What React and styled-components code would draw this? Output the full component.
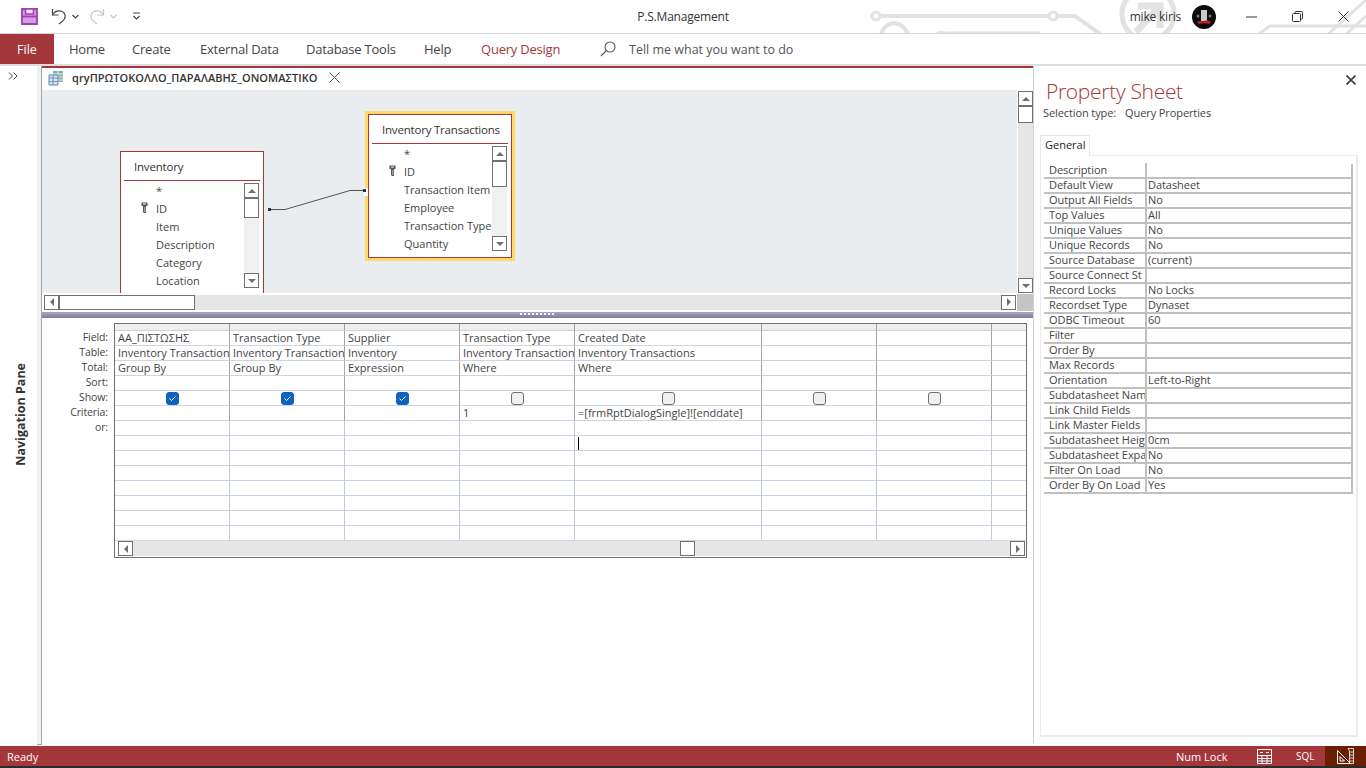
import React from "react";
import styled, { createGlobalStyle, css } from "styled-components";

const Global = createGlobalStyle`
    html, body {
        margin: 0;
        padding: 0;
        background: #fff;
    }
    * {
        box-sizing: border-box;
    }
    body {
        font-family: "Open Sans", "Noto Sans", "Liberation Sans", sans-serif;
        color: #444;
    }
`;

const RED = "#a4373a";

const Window = styled.div`
    width: 1366px;
    height: 768px;
    display: flex;
    flex-direction: column;
    overflow: hidden;
    background: #fff;
`;

/* title bar */
const TitleBar = styled.div`
    position: relative;
    height: 34px;
    flex: none;
    display: grid;
    grid-template-columns: 1fr auto 1fr;
    align-items: center;
    border-bottom: 1px solid #d6d6d6;
`;
const Circuit = styled.svg`
    position: absolute;
    left: 0;
    top: 0;
    width: 1366px;
    height: 33px;
`;
const Quick = styled.div`
    position: relative;
    display: flex;
    align-items: center;
    padding-left: 21px;
    height: 33px;
`;
const QuickBtn = styled.div`
    display: flex;
    align-items: center;
    margin-left: ${(p) => p.$gap || 0}px;
`;
const AppName = styled.div`
    position: relative;
    font-size: 12px;
    color: #333;
    letter-spacing: -0.2px;
`;
const Account = styled.div`
    position: relative;
    display: flex;
    align-items: center;
    justify-content: flex-end;
    height: 33px;
`;
const UserName = styled.div`
    font-size: 12px;
    letter-spacing: -0.2px;
    color: #333;
    margin-right: 11px;
`;
const WinBtn = styled.div`
    width: 46px;
    height: 33px;
    display: flex;
    align-items: center;
    justify-content: center;
    margin-left: ${(p) => p.$gap || 0}px;
`;

/* ribbon */
const Ribbon = styled.div`
    height: 32px;
    flex: none;
    display: flex;
    align-items: flex-start;
    border-bottom: 2px solid #dedede;
`;
const FileTab = styled.div`
    width: 54px;
    margin-right: 15px;
    height: 30px;
    background: ${RED};
    color: #fff;
    font-size: 12.5px;
    display: flex;
    align-items: center;
    justify-content: center;
`;
const RibbonTab = styled.div`
    width: ${(p) => p.$w}px;
    height: 30px;
    line-height: 31px;
    font-size: 13px;
    white-space: nowrap;
    letter-spacing: -0.22px;
    color: ${(p) => (p.$accent ? RED : "#444")};
`;
const TellMe = styled.div`
    display: flex;
    align-items: center;
    height: 30px;
    gap: 13px;
    font-size: 12.5px;
    color: #555;
`;

/* main */
const Main = styled.div`
    flex: 1;
    min-height: 0;
    display: flex;
`;
const NavPane = styled.div`
    width: 37px;
    flex: none;
    display: flex;
    flex-direction: column;
`;
const NavToggle = styled.div`
    height: 20px;
    padding-left: 8px;
    flex: none;
    display: flex;
    align-items: center;
`;
const NavLabelBox = styled.div`
    flex: 1;
    display: flex;
    align-items: center;
    justify-content: center;
    padding-left: 3px;
`;
const NavLabel = styled.div`
    writing-mode: vertical-rl;
    transform: rotate(180deg);
    font-size: 12.5px;
    font-weight: 700;
    color: #333;
`;
const NavEdge = styled.div`
    width: 5px;
    flex: none;
    height: 679px;
    background: #f0f0f0;
    border-right: 1px solid #a3a6ac;
    border-bottom: 1px solid #a3a6ac;
`;

const Doc = styled.div`
    width: 991px;
    flex: none;
    display: flex;
    flex-direction: column;
`;
const TabStrip = styled.div`
    height: 24px;
    flex: none;
    display: flex;
    align-items: center;
    border-top: 2px solid ${RED};
    padding: 0 0 3px 6px;
`;
const TabIconBox = styled.div`
    display: flex;
    margin-right: 8px;
`;
const TabTitle = styled.div`
    width: 257px;
    font-size: 11px;
    font-weight: 600;
    letter-spacing: 0.05px;
    color: #333;
    white-space: nowrap;
`;

const UpperPane = styled.div`
    height: 203px;
    flex: none;
    display: flex;
    gap: 1px;
`;
const Canvas = styled.div`
    position: relative;
    flex: 1;
    overflow: hidden;
    background: #e9edf0;
`;
const Relation = styled.svg`
    position: absolute;
    left: 0;
    top: 0;
    width: 100%;
    height: 100%;
    z-index: 2;
`;
const TableBox = styled.div`
    position: absolute;
    left: ${(p) => p.$x}px;
    top: ${(p) => p.$y}px;
    width: 144px;
    height: 144px;
    background: #fff;
    border: 1.5px solid ${RED};
    ${(p) =>
        p.$active &&
        css`
            box-shadow: 0 0 0 3px #ffd966;
        `}
`;
const TableHead = styled.div`
    height: 29px;
    margin: 0 3px;
    padding-left: 10px;
    line-height: 30px;
    font-size: 11.5px;
    color: #333;
    letter-spacing: -0.2px;
    white-space: nowrap;
    border-bottom: 1px solid ${RED};
`;
const TableBody = styled.div`
    display: flex;
`;
const FieldList = styled.div`
    flex: 1;
    min-width: 0;
    overflow: hidden;
`;
const FieldRow = styled.div`
    height: 18px;
    display: flex;
    align-items: center;
    font-size: 11px;
    color: #444;
    white-space: nowrap;
`;
const KeySlot = styled.div`
    width: 35px;
    flex: none;
    display: flex;
    padding-left: 20px;
`;
const VBar = styled.div`
    width: 15px;
    flex: none;
    height: ${(p) => p.$h || "auto"};
    margin: ${(p) => (p.$inTable ? "2px 4px 0 0" : "1px 0 0 0")};
    display: flex;
    flex-direction: column;
    background: ${(p) => (p.$inTable ? "#f0f0f0" : "#e6e6e6")};
`;
const HBar = styled.div`
    flex: 1;
    height: 15px;
    display: flex;
    justify-content: space-between;
    background: #e6e6e6;
`;
const Thumb = styled.div`
    flex: none;
    background: #fff;
    border: 1px solid #707070;
    width: ${(p) => p.$w || 15}px;
    height: ${(p) => p.$h || 15}px;
`;
const Spacer = styled.div`
    flex: 1;
`;
const BarStart = styled.div`
    display: flex;
`;
const BarBtn = styled.div`
    width: 15px;
    height: 15px;
    flex: none;
    background: #fff;
    border: 1px solid #707070;
    display: flex;
    align-items: center;
    justify-content: center;
    &::after {
        content: "";
        width: 0;
        height: 0;
        ${(p) =>
            p.$dir === "up" &&
            css`
                border-left: 4px solid transparent;
                border-right: 4px solid transparent;
                border-bottom: 4px solid #707070;
            `}
        ${(p) =>
            p.$dir === "down" &&
            css`
                border-left: 4px solid transparent;
                border-right: 4px solid transparent;
                border-top: 4px solid #707070;
            `}
        ${(p) =>
            p.$dir === "left" &&
            css`
                border-top: 4px solid transparent;
                border-bottom: 4px solid transparent;
                border-right: 4px solid #707070;
            `}
        ${(p) =>
            p.$dir === "right" &&
            css`
                border-top: 4px solid transparent;
                border-bottom: 4px solid transparent;
                border-left: 4px solid #707070;
            `}
    }
`;
const HScrollRow = styled.div`
    height: 18px;
    flex: none;
    display: flex;
    align-items: center;
    padding-left: 2px;
`;
const LongBar = styled(HBar)`
    flex: none;
    width: 972px;
    margin-right: 1px;
`;
const Corner = styled.div`
    width: 16px;
    height: 17px;
    background: #c4c5c7;
`;
const Splitter = styled.div`
    height: 6px;
    flex: none;
    margin-top: 1px;
    background: linear-gradient(#a9a6c0, #7f7c9c);
    display: flex;
    justify-content: flex-start;
    padding-left: 478px;
`;
const Grip = styled.div`
    width: 36px;
    height: 2px;
    margin-top: 1px;
    background: repeating-linear-gradient(90deg, #fff 0 2px, transparent 2px 4px);
`;

/* query grid */
const QueryPane = styled.div`
    flex: 1;
    display: flex;
    padding-top: 5px;
    align-items: flex-start;
`;
const Labels = styled.div`
    width: 72px;
    flex: none;
    padding: 7px 6px 0 0;
`;
const Label = styled.div`
    height: 15px;
    line-height: 14px;
    font-size: 10.5px;
    text-align: right;
    color: #444;
    letter-spacing: -0.1px;
`;
const GridBox = styled.div`
    width: 913px;
    border: 1px solid #707070;
`;
const GridTable = styled.div`
    display: grid;
    grid-template-columns: 115px 115px 115px 115px 187px 115px 115px 34px;
`;
const HeadCell = styled.div`
    height: 7px;
    background: #eeeeee;
    border-right: 1px solid #a0a0a0;
    border-bottom: 1px solid #c9d2e0;
    &:nth-child(8n) {
        border-right: 0;
    }
`;
const Cell = styled.div`
    height: 15px;
    padding-left: ${(p) => (p.$center ? 0 : 3)}px;
    line-height: 14px;
    font-size: 11px;
    white-space: nowrap;
    overflow: hidden;
    color: #444;
    border-bottom: 1px solid #cdd5e2;
    border-right: ${(p) => (p.$last ? "0" : `1px solid ${p.$strong ? "#a6a6a6" : "#c4ccd8"}`)};
    display: flex;
    align-items: center;
    justify-content: ${(p) => (p.$center ? "center" : "flex-start")};
`;
const Box = styled.div`
    width: 13px;
    height: 13px;
    border-radius: 3px;
    display: flex;
    align-items: center;
    justify-content: center;
    background: ${(p) => (p.$on ? "#0f62be" : "#f0f0f0")};
    border: 1px solid ${(p) => (p.$on ? "#0f62be" : "#707070")};
`;
const Caret = styled.div`
    width: 1px;
    height: 13px;
    background: #000;
`;
const GridFoot = styled.div`
    height: 16px;
    padding: 0 2px 0 3px;
    display: flex;
`;
const GridBar = styled(HBar)`
    align-items: center;
    justify-content: flex-start;
`;
const MidThumb = styled(Thumb)`
    margin-left: 547px;
    margin-right: 315px;
`;

/* property sheet */
const Sheet = styled.div`
    flex: 1;
    display: flex;
    flex-direction: column;
    position: relative;
    height: 677px;
    border-left: 1px solid #d2d2d2;
    padding: 0 8px 0 6px;
`;
const CloseBtn = styled.div`
    position: absolute;
    right: 10px;
    top: 9px;
    display: flex;
`;
const SheetTitle = styled.div`
    margin: 10px 0 0 6px;
    height: 29px;
    line-height: 30px;
    font-size: 21px;
    font-weight: 300;
    color: ${RED};
    letter-spacing: -0.3px;
`;
const Selection = styled.div`
    height: 14px;
    margin: 0 0 0 3px;
    display: flex;
    align-items: center;
    gap: 9px;
    font-size: 11px;
    letter-spacing: -0.1px;
    color: #444;
`;
const SheetTab = styled.div`
    width: 50px;
    height: 21px;
    margin-top: 16px;
    padding-left: 4px;
    line-height: 17px;
    font-size: 11px;
    color: #222;
    background: #fff;
    border: 1px solid #e6e6e6;
    border-bottom: 0;
    position: relative;
    z-index: 1;
`;
const SheetPanel = styled.div`
    height: 582px;
    margin-top: -1px;
    padding: 8px 3px 0 3px;
    border: 2px solid #ececec;
    border-top-width: 1px;
    border-left-width: 1px;
`;
const PropRow = styled.div`
    display: grid;
    grid-template-columns: 103px 1fr;
    height: 15px;
    border-bottom: 2px solid #c0c0c0;
    border-right: 2px solid #c0c0c0;
    font-size: 11px;
    line-height: 13px;
    letter-spacing: -0.05px;
    color: #444;
`;
const PropName = styled.div`
    height: 14px;
    margin-top: -1px;
    padding-left: 5px;
    white-space: nowrap;
    overflow: hidden;
    border-right: 2px solid #c0c0c0;
`;
const PropValue = styled.div`
    height: 14px;
    margin-top: -1px;
    padding-left: 1px;
    white-space: nowrap;
`;

/* status bar */
const StatusBar = styled.div`
    height: 22px;
    flex: none;
    margin-top: 3px;
    display: flex;
    align-items: stretch;
    background: ${RED};
    border-bottom: 2px solid #2b2b2b;
    color: #fff;
`;
const StatusText = styled.div`
    display: flex;
    align-items: center;
    padding-left: ${(p) => p.$left || 0}px;
    width: ${(p) => (p.$w ? `${p.$w}px` : "auto")};
    font-size: ${(p) => p.$size || 11}px;
    flex: ${(p) => (p.$grow ? 1 : "none")};
`;
const StatusIcon = styled.div`
    display: flex;
    align-items: center;
    justify-content: center;
    width: ${(p) => p.$w}px;
    background: ${(p) => (p.$on ? "#6a1e02" : "transparent")};
`;

const columns = [
    { field: "ΑΑ_ΠΙΣΤΩΣΗΣ", table: "Inventory Transaction", total: "Group By", show: true },
    { field: "Transaction Type", table: "Inventory Transaction", total: "Group By", show: true },
    { field: "Supplier", table: "Inventory", total: "Expression", show: true },
    { field: "Transaction Type", table: "Inventory Transaction", total: "Where", show: false, criteria: "1" },
    { field: "Created Date", table: "Inventory Transactions", total: "Where", show: false, criteria: "=[frmRptDialogSingle]![enddate]", caret: true },
    { show: false },
    { show: false },
    {},
];

const rowLabels = ["Field:", "Table:", "Total:", "Sort:", "Show:", "Criteria:", "or:"];

const properties = [
    ["Description", ""],
    ["Default View", "Datasheet"],
    ["Output All Fields", "No"],
    ["Top Values", "All"],
    ["Unique Values", "No"],
    ["Unique Records", "No"],
    ["Source Database", "(current)"],
    ["Source Connect St", ""],
    ["Record Locks", "No Locks"],
    ["Recordset Type", "Dynaset"],
    ["ODBC Timeout", "60"],
    ["Filter", ""],
    ["Order By", ""],
    ["Max Records", ""],
    ["Orientation", "Left-to-Right"],
    ["Subdatasheet Nam", ""],
    ["Link Child Fields", ""],
    ["Link Master Fields", ""],
    ["Subdatasheet Heig", "0cm"],
    ["Subdatasheet Expa", "No"],
    ["Filter On Load", "No"],
    ["Order By On Load", "Yes"],
];

const ribbonTabs = [
    ["Home", 63],
    ["Create", 68],
    ["External Data", 106],
    ["Database Tools", 118],
    ["Help", 57],
    ["Query Design", 119],
];

function SaveIcon() {
    return (
        <svg width="17" height="17" viewBox="0 0 17 17">
            <path d="M1 1h15v15H1z" fill="#d79ce2" stroke="#a13fb8" strokeWidth="1.8" />
            <path d="M4.500 1h8v5h-8z" fill="#f3e3f6" stroke="#a13fb8" strokeWidth="1.500" />
            <path d="M1 8.500h15" stroke="#a13fb8" strokeWidth="1.800" />
        </svg>
    );
}

function UndoIcon({ color }) {
    return (
        <svg width="16" height="17" viewBox="0 0 16 17" fill="none" stroke={color} strokeWidth="1.2">
            <path d="M1.500 1v6h6" />
            <path d="M1.500 7C4 3 8 2.500 11 3.500c3.500 1.500 4 5.500 2 8-1.500 2-3 3-5 4.500" />
        </svg>
    );
}

function Chevron({ color }) {
    return (
        <svg width="7" height="5" viewBox="0 0 7 5" fill="none" stroke={color} strokeWidth="1.2">
            <path d="M0.500 1l3 3 3-3" />
        </svg>
    );
}

function KeyIcon() {
    return (
        <svg width="7" height="12" viewBox="0 0 7 12">
            <path d="M0.500 0.500h6v3.500h-1.500v7h-2l-1-1v-6h-1.500z" fill="#555" />
            <path d="M2 1.500h3v1H2z" fill="#fff" />
            <path d="M3.500 5h0.800v5h-0.800z" fill="#ddd" />
        </svg>
    );
}

function ScrollV({ h, thumb, inTable }) {
    return (
        <VBar $h={h} $inTable={inTable}>
            <BarBtn $dir="up" />
            <Thumb $h={thumb} />
            <Spacer />
            <BarBtn $dir="down" />
        </VBar>
    );
}

function TableWindow({ x, y, title, fields, thumb, active }) {
    return (
        <TableBox $x={x} $y={y} $active={active}>
            <TableHead>{title}</TableHead>
            <TableBody>
                <FieldList>
                    {fields.map((f) => (
                        <FieldRow key={f}>
                            <KeySlot>{f === "ID" && <KeyIcon />}</KeySlot>
                            {f}
                        </FieldRow>
                    ))}
                </FieldList>
                <ScrollV h="105px" thumb={thumb} inTable />
            </TableBody>
        </TableBox>
    );
}

function cellFor(col, row) {
    if (row === 0) return col.field;
    if (row === 1) return col.table;
    if (row === 2) return col.total;
    if (row === 5) return col.criteria;
    if (row === 7 && col.caret) return <Caret />;
    return null;
}

export default function App() {
    return (
        <Window>
            <Global />
            <TitleBar>
                <Circuit viewBox="0 0 1366 33" fill="none" stroke="#e2e2e2" strokeWidth="4">
                    <circle cx="876" cy="16" r="4" strokeWidth="3" />
                    <path d="M880 16h170" />
                    <circle cx="1053" cy="16" r="4" strokeWidth="3" />
                    <path d="M1057 16h18l28 20" />
                    <path d="M881 36c2-17 24-17 27 0" />
                    <circle cx="941" cy="36" r="4" strokeWidth="3" />
                    <path d="M945 33h95" strokeWidth="3" />
                    <circle cx="1148" cy="14" r="26" strokeWidth="5" />
                    <path d="M1138 6h22v22M1158 8l-22 24" strokeWidth="7" />
                    <path d="M1256 36l14-10h96" strokeWidth="3" />
                    <path d="M1326 36l40-36M1344 36l22-20" strokeWidth="3" />
                </Circuit>
                <Quick>
                    <QuickBtn>
                        <SaveIcon />
                    </QuickBtn>
                    <QuickBtn $gap={13}>
                        <UndoIcon color="#444" />
                    </QuickBtn>
                    <QuickBtn $gap={5}>
                        <Chevron color="#444" />
                    </QuickBtn>
                    <QuickBtn $gap={10}>
                        <svg width="16" height="17" viewBox="0 0 16 17" fill="none" stroke="#c4c4c4" strokeWidth="1.2">
                            <path d="M14.500 1v6h-6" />
                            <path d="M14.500 7C12 3 8 2.500 5 3.500c-3.500 1.500-4 5.500-2 8 1.500 2 3 3 5 4.500" />
                        </svg>
                    </QuickBtn>
                    <QuickBtn $gap={5}>
                        <Chevron color="#c4c4c4" />
                    </QuickBtn>
                    <QuickBtn $gap={15}>
                        <svg width="9" height="9" viewBox="0 0 9 9" fill="none" stroke="#444" strokeWidth="1.2">
                            <path d="M1 1h7M1.500 4l3 3 3-3" />
                        </svg>
                    </QuickBtn>
                </Quick>
                <AppName>P.S.Management</AppName>
                <Account>
                    <UserName>mike kiris</UserName>
                    <svg width="24" height="24" viewBox="0 0 24 24">
                        <circle cx="12" cy="12" r="12" fill="#0c0c0c" />
                        <path d="M9 5h6v11H9z" fill="#c9c9c9" />
                        <path d="M5 17c3-2 4 0 7-1s4-1 7 1l-2 2c-3-1-7-1-10 0z" fill="#c0202a" />
                        <circle cx="6" cy="11" r="1.500" fill="#777" />
                        <circle cx="18" cy="11" r="1.500" fill="#777" />
                    </svg>
                    <WinBtn $gap={12}>
                        <svg width="11" height="2" viewBox="0 0 11 2">
                            <path d="M0 1h11" stroke="#333" />
                        </svg>
                    </WinBtn>
                    <WinBtn>
                        <svg width="11" height="11" viewBox="0 0 11 11" fill="none" stroke="#333">
                            <rect x="0.500" y="2.500" width="8" height="8" rx="1" />
                            <path d="M3 2.500v-1a1 1 0 0 1 1-1h5.500a1 1 0 0 1 1 1v5.500a1 1 0 0 1-1 1h-1" />
                        </svg>
                    </WinBtn>
                    <WinBtn>
                        <svg width="11" height="11" viewBox="0 0 11 11" stroke="#333">
                            <path d="M0.500 0.500l10 10M10.500 0.500l-10 10" />
                        </svg>
                    </WinBtn>
                </Account>
            </TitleBar>

            <Ribbon>
                <FileTab>File</FileTab>
                {ribbonTabs.map(([name, w]) => (
                    <RibbonTab key={name} $w={w} $accent={name === "Query Design"}>
                        {name}
                    </RibbonTab>
                ))}
                <TellMe>
                    <svg width="16" height="16" viewBox="0 0 16 16" fill="none" stroke="#555" strokeWidth="1.1">
                        <circle cx="10" cy="6" r="5" />
                        <path d="M6.500 9.500L1 15" />
                    </svg>
                    Tell me what you want to do
                </TellMe>
            </Ribbon>

            <Main>
                <NavPane>
                    <NavToggle>
                        <svg width="10" height="8" viewBox="0 0 10 8" fill="none" stroke="#444">
                            <path d="M1 0.500l3.500 3.500L1 7.500M5.500 0.500L9 4l-3.500 3.500" />
                        </svg>
                    </NavToggle>
                    <NavLabelBox>
                        <NavLabel>Navigation Pane</NavLabel>
                    </NavLabelBox>
                </NavPane>
                <NavEdge />

                <Doc>
                    <TabStrip>
                        <TabIconBox>
                            <svg width="16" height="16" viewBox="0 0 16 16">
                                <path d="M5 1h10v11H5z" fill="#8fb0a8" />
                                <path d="M5 4h10M5 7h10M5 10h10M10 1v11" stroke="#fff" strokeWidth="0.800" />
                                <path d="M1 5h9v10H1z" fill="#d7e4ef" stroke="#5b87b2" />
                                <path d="M1 8h9M1 11.500h9M5 5v10" stroke="#5b87b2" strokeWidth="0.800" />
                            </svg>
                        </TabIconBox>
                        <TabTitle>qryΠΡΩΤΟΚΟΛΛΟ_ΠΑΡΑΛΑΒΗΣ_ΟΝΟΜΑΣΤΙΚΟ</TabTitle>
                        <svg width="11" height="11" viewBox="0 0 11 11" stroke="#555">
                            <path d="M0.500 0.500l10 10M10.500 0.500l-10 10" />
                        </svg>
                    </TabStrip>

                    <UpperPane>
                        <Canvas>
                            <TableWindow
                                x={78}
                                y={61}
                                title="Inventory"
                                thumb={20}
                                fields={["*", "ID", "Item", "Description", "Category", "Location"]}
                            />
                            <TableWindow
                                x={326}
                                y={24}
                                active
                                title="Inventory Transactions"
                                thumb={26}
                                fields={["*", "ID", "Transaction Item", "Employee", "Transaction Type", "Quantity"]}
                            />
                            <Relation>
                                <path d="M322 98h4v8h-4z" fill="#fff" />
                                <path d="M227 119.500h16l65-19h14" fill="none" stroke="#555" strokeWidth="1" />
                                <rect x="226" y="118" width="3" height="3" fill="#333" />
                                <rect x="321" y="99" width="3" height="3" fill="#333" />
                            </Relation>
                        </Canvas>
                        <ScrollV thumb={17} />
                    </UpperPane>

                    <HScrollRow>
                        <LongBar>
                            <BarStart>
                                <BarBtn $dir="left" />
                                <Thumb $w={136} />
                            </BarStart>
                            <BarBtn $dir="right" />
                        </LongBar>
                        <Corner />
                    </HScrollRow>

                    <Splitter>
                        <Grip />
                    </Splitter>

                    <QueryPane>
                        <Labels>
                            {rowLabels.map((l) => (
                                <Label key={l}>{l}</Label>
                            ))}
                        </Labels>
                        <GridBox>
                            <GridTable>
                                {columns.map((c, i) => (
                                    <HeadCell key={i} />
                                ))}
                                {Array.from({ length: 14 }).map((_, row) =>
                                    columns.map((col, i) => (
                                        <Cell key={`${row}-${i}`} $last={i === 7} $strong={row < 6} $center={row === 4}>
                                            {row === 4 && i < 7 ? (
                                                <Box $on={col.show}>
                                                    {col.show && (
                                                        <svg width="9" height="9" viewBox="0 0 9 9" fill="none" stroke="#fff">
                                                            <path d="M1.500 4.500l2 2 4-4" />
                                                        </svg>
                                                    )}
                                                </Box>
                                            ) : (
                                                cellFor(col, row)
                                            )}
                                        </Cell>
                                    )),
                                )}
                            </GridTable>
                            <GridFoot>
                                <GridBar>
                                    <BarBtn $dir="left" />
                                    <MidThumb />
                                    <BarBtn $dir="right" />
                                </GridBar>
                            </GridFoot>
                        </GridBox>
                    </QueryPane>
                </Doc>

                <Sheet>
                    <CloseBtn>
                        <svg width="10" height="10" viewBox="0 0 10 10" stroke="#444" strokeWidth="1.800">
                            <path d="M0.500 0.500l9 9M9.500 0.500l-9 9" />
                        </svg>
                    </CloseBtn>
                    <SheetTitle>Property Sheet</SheetTitle>
                    <Selection>
                        <span>Selection type:</span>
                        <span>Query Properties</span>
                    </Selection>
                    <SheetTab>General</SheetTab>
                    <SheetPanel>
                        {properties.map(([name, value]) => (
                            <PropRow key={name}>
                                <PropName>{name}</PropName>
                                <PropValue>{value}</PropValue>
                            </PropRow>
                        ))}
                    </SheetPanel>
                </Sheet>
            </Main>

            <StatusBar>
                <StatusText $left={7} $grow>
                    Ready
                </StatusText>
                <StatusText $w={81}>Num Lock</StatusText>
                <StatusIcon $w={15}>
                    <svg width="15" height="15" viewBox="0 0 15 15" fill="none" stroke="#fff">
                        <path d="M0.500 0.500h14v14h-14zM0.500 6.500h14M0.500 9.500h14M0.500 12h14M5 6.500v8M10 6.500v8" />
                        <path d="M3 3.500h3M9 3.500h3" />
                    </svg>
                </StatusIcon>
                <StatusText $w={53} $left={24} $size={10}>
                    SQL
                </StatusText>
                <StatusIcon $w={41} $on>
                    <svg width="17" height="16" viewBox="0 0 17 16" fill="none" stroke="#fff">
                        <path d="M0.500 2.500v13h13zM3 8.500v4.500h4.500z" />
                        <path d="M11 0.500h5.500v15h-4V3zM13 4h3M13 7h3M13 10h3M13 13h3" strokeWidth="0.800" />
                    </svg>
                </StatusIcon>
            </StatusBar>
        </Window>
    );
}
